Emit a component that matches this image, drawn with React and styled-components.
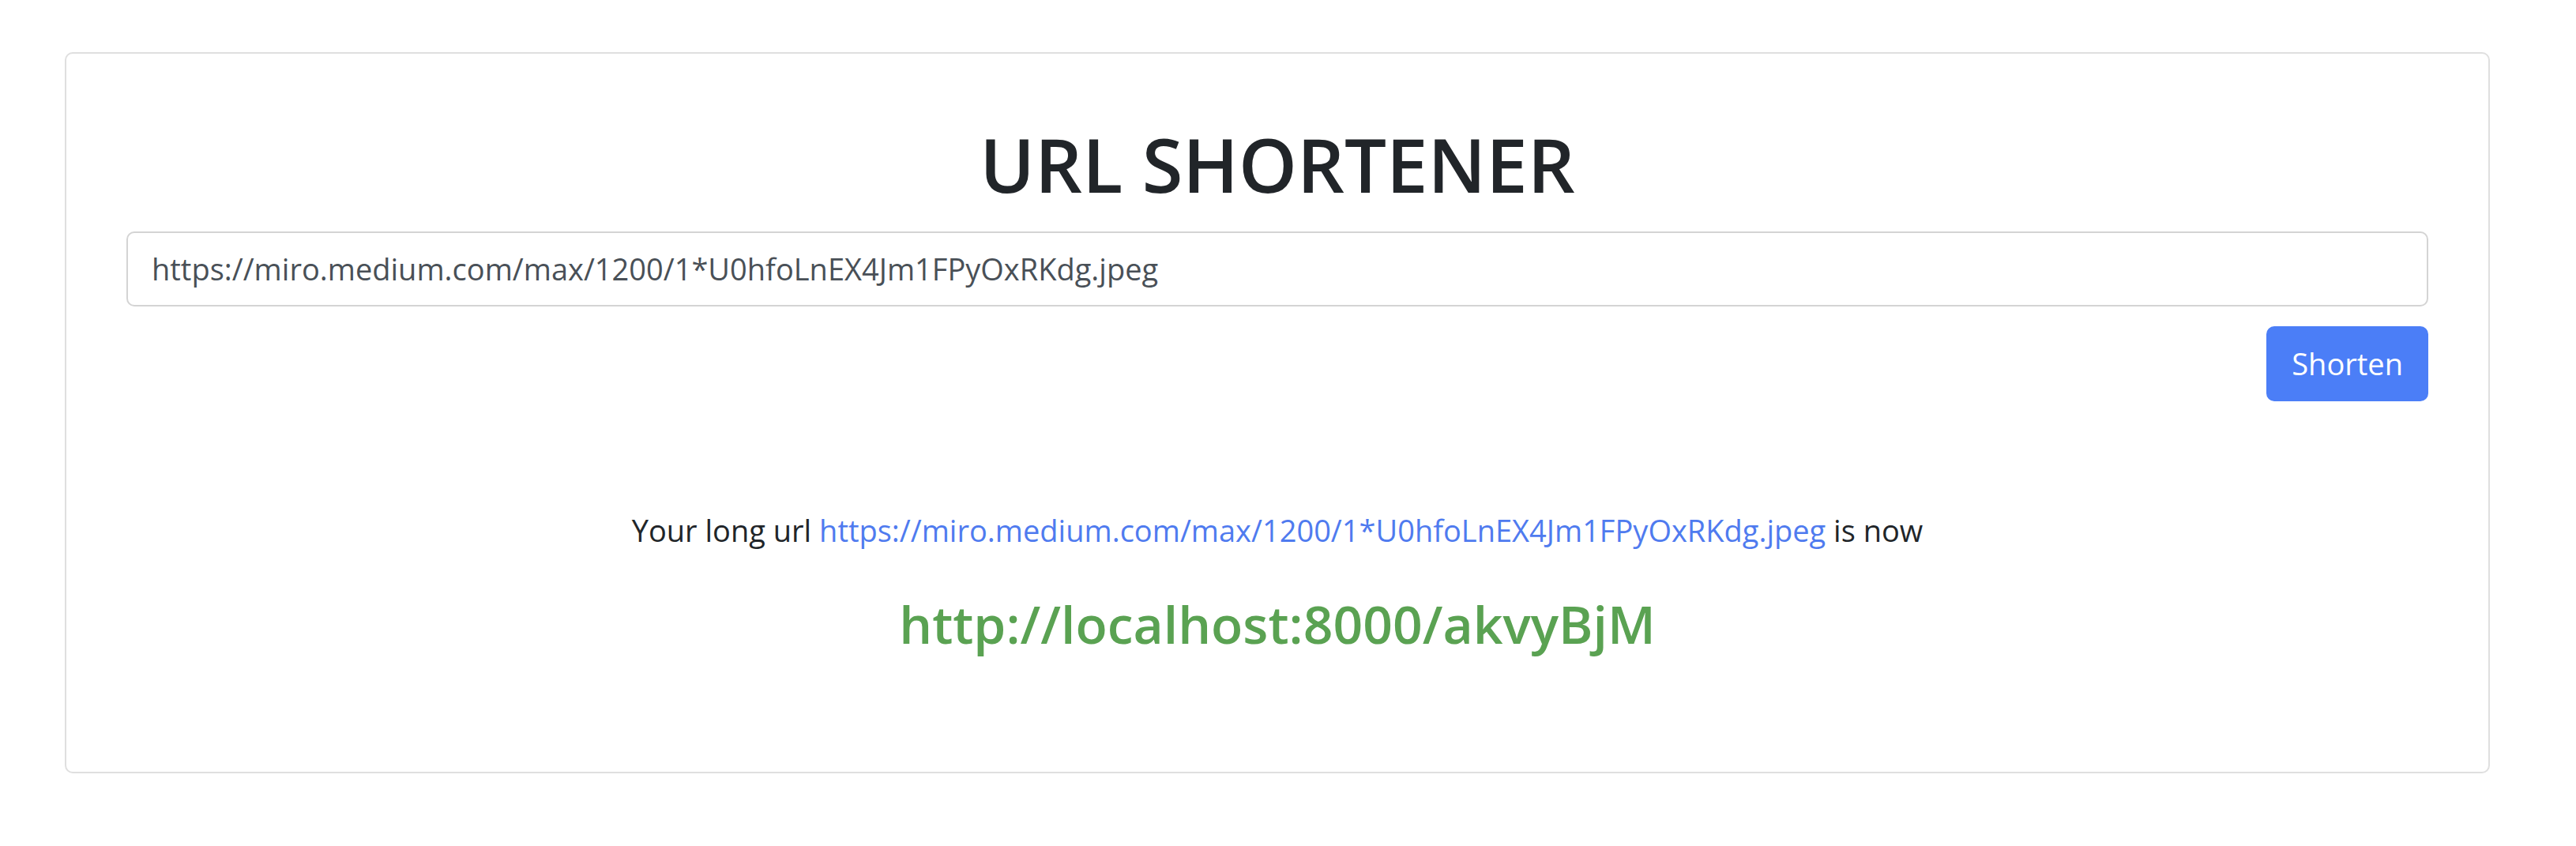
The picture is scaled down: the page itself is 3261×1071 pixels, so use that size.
import React, { useState } from 'react';
import styled, { createGlobalStyle } from 'styled-components';

const GlobalStyle = createGlobalStyle`
  body {
    margin: 0;
    background: #ffffff;
    font-family: "Open Sans", "Noto Sans", sans-serif;
    color: #212529;
  }
`;

const Page = styled.div`
  padding: 66px 109px 0 82px;
`;

const Card = styled.div`
  display: flex;
  flex-direction: column;
  border: 2px solid #dfdfdf;
  border-radius: 10px;
  padding: 84px 76px 148px;
`;

const Title = styled.h1`
  margin: 0 0 28px;
  text-align: center;
  font-size: 94px;
  font-weight: 600;
  line-height: 1.2;
  color: #212529;
`;

const Form = styled.form`
  display: flex;
  flex-direction: column;
  align-items: flex-end;
  gap: 25px;
`;

const UrlInput = styled.input`
  box-sizing: border-box;
  width: 100%;
  height: 95px;
  padding: 0 30px;
  border: 2px solid #d4d4d4;
  border-radius: 10px;
  font-family: inherit;
  font-size: 38px;
  color: #495057;
  outline: none;
`;

const Button = styled.button`
  height: 95px;
  padding: 0 32px;
  border: none;
  border-radius: 10px;
  background: #4b7ef7;
  color: #ffffff;
  font-family: inherit;
  font-size: 38px;
  cursor: pointer;
`;

const Result = styled.div`
  margin-top: 135px;
  text-align: center;
`;

const Message = styled.p`
  margin: 0 0 50px;
  font-size: 38px;
  line-height: 1.5;
  color: #212529;
`;

const LongLink = styled.a`
  color: #4f7bef;
  text-decoration: none;
`;

const ShortLink = styled.a`
  display: block;
  font-size: 66px;
  font-weight: 600;
  line-height: 1.2;
  color: #5aa252;
  text-decoration: none;
`;

const LONG_URL = 'https://miro.medium.com/max/1200/1*U0hfoLnEX4Jm1FPyOxRKdg.jpeg';
const SHORT_URL = 'http://localhost:8000/akvyBjM';

const App = () => {
  const [url, setUrl] = useState(LONG_URL);

  return (
    <Page>
      <GlobalStyle />
      <Card>
        <Title>URL SHORTENER</Title>
        <Form onSubmit={(e) => e.preventDefault()}>
          <UrlInput value={url} onChange={(e) => setUrl(e.target.value)} />
          <Button type="submit">Shorten</Button>
        </Form>
        <Result>
          <Message>
            Your long url <LongLink href={LONG_URL}>{LONG_URL}</LongLink> is now
          </Message>
          <ShortLink href={SHORT_URL}>{SHORT_URL}</ShortLink>
        </Result>
      </Card>
    </Page>
  );
};

export default App;
